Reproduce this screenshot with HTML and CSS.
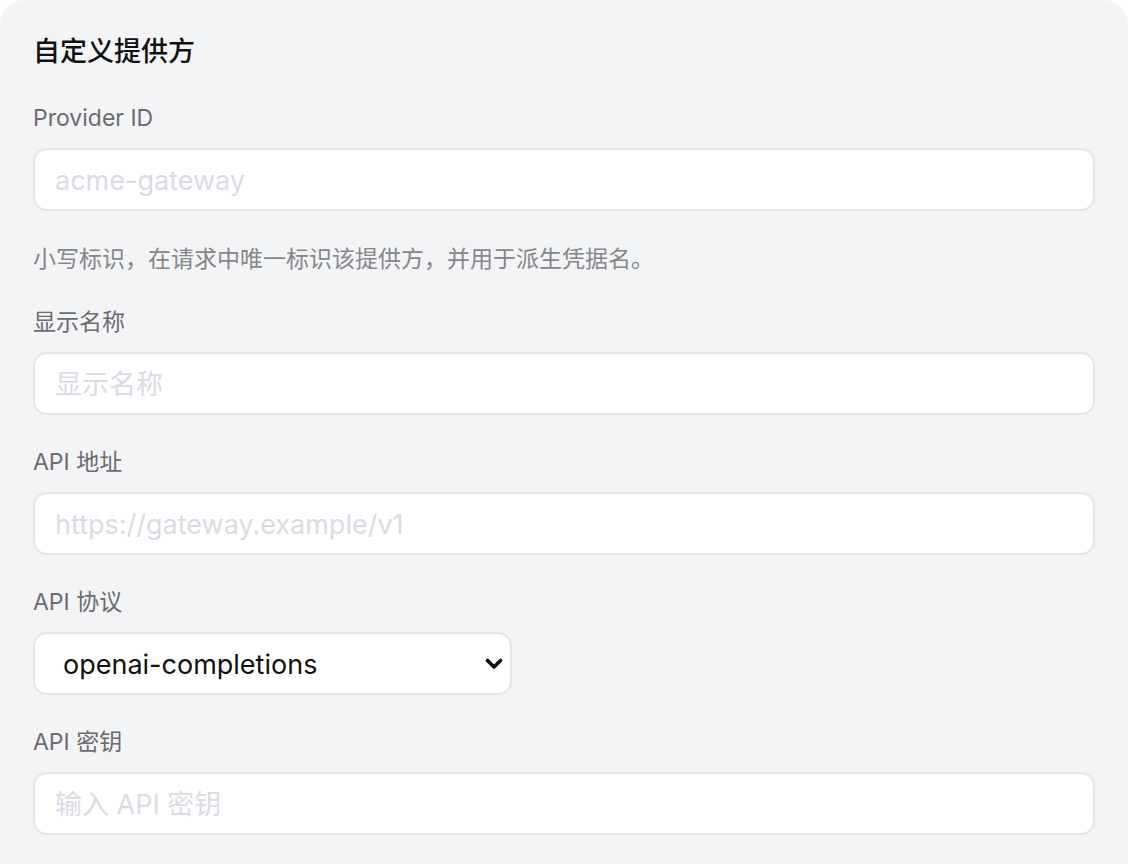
FILE: index.html
```html
<!DOCTYPE html>
<html lang="zh-CN">
<head>
<meta charset="utf-8">
<title>自定义提供方</title>
<link rel="stylesheet" href="styles.css">
</head>
<body>
<section class="card">
  <h2 class="title">自定义提供方</h2>
  <div class="fields">
    <div class="field">
      <label class="label" for="pid">Provider ID</label>
      <input class="input" id="pid" type="text" placeholder="acme-gateway">
      <p class="hint">小写标识，在请求中唯一标识该提供方，并用于派生凭据名。</p>
    </div>
    <div class="field">
      <label class="label" for="dname">显示名称</label>
      <input class="input" id="dname" type="text" placeholder="显示名称">
    </div>
    <div class="field">
      <label class="label" for="url">API 地址</label>
      <input class="input" id="url" type="text" placeholder="https://gateway.example/v1">
    </div>
    <div class="field">
      <label class="label" for="proto">API 协议</label>
      <div class="select-wrap">
        <select class="select" id="proto">
          <option>openai-completions</option>
          <option>openai-responses</option>
          <option>anthropic-messages</option>
        </select>
        <svg class="chevron" viewBox="0 0 18 12" width="18" height="12" aria-hidden="true">
          <path d="M2.5 2.5 L9 9 L15.5 2.5" fill="none" stroke="#111" stroke-width="3.6" stroke-linecap="round" stroke-linejoin="round"/>
        </svg>
      </div>
    </div>
    <div class="field">
      <label class="label" for="key">API 密钥</label>
      <input class="input" id="key" type="password" placeholder="输入 API 密钥">
    </div>
  </div>
</section>
</body>
</html>
```

FILE: styles.css
```css
html, body {
  margin: 0;
  padding: 0;
  background: #ffffff;
}

body {
  font-family: "Inter", "Noto Sans CJK SC", "Noto Sans", sans-serif;
  color: #111111;
}

.card {
  background: #f3f4f6;
  border-radius: 24px 24px 0 0;
  padding: 32px 33px 40px 33px;
  min-height: 864px;
  box-sizing: border-box;
}

.title {
  margin: 0 0 30px 0;
  font-size: 27px;
  line-height: 40px;
  font-weight: 500;
  color: #111111;
}

.fields {
  display: flex;
  flex-direction: column;
  gap: 31px;
}

.field {
  display: flex;
  flex-direction: column;
}

.label {
  font-size: 23px;
  line-height: 32px;
  color: #6b6b70;
  margin-bottom: 14px;
}

.input {
  box-sizing: border-box;
  width: 100%;
  height: 63px;
  border: 2px solid #e4e5e8;
  border-radius: 14px;
  background: #ffffff;
  padding: 2px 20px 0 20px;
  font-family: inherit;
  font-size: 27px;
  color: #111111;
  outline: none;
}

.input::placeholder {
  color: #d9dce5;
}

.hint {
  margin: 32px 0 0 0;
  font-size: 23px;
  line-height: 32px;
  color: #86868b;
}

.select-wrap {
  position: relative;
  width: 479px;
}

.select {
  -webkit-appearance: none;
  appearance: none;
  box-sizing: border-box;
  width: 100%;
  height: 63px;
  border: 2px solid #e4e5e8;
  border-radius: 14px;
  background: #ffffff;
  padding: 2px 50px 0 28px;
  font-family: inherit;
  font-size: 27px;
  color: #111111;
  outline: none;
}

.chevron {
  position: absolute;
  right: 9px;
  top: 26px;
  pointer-events: none;
}
```
